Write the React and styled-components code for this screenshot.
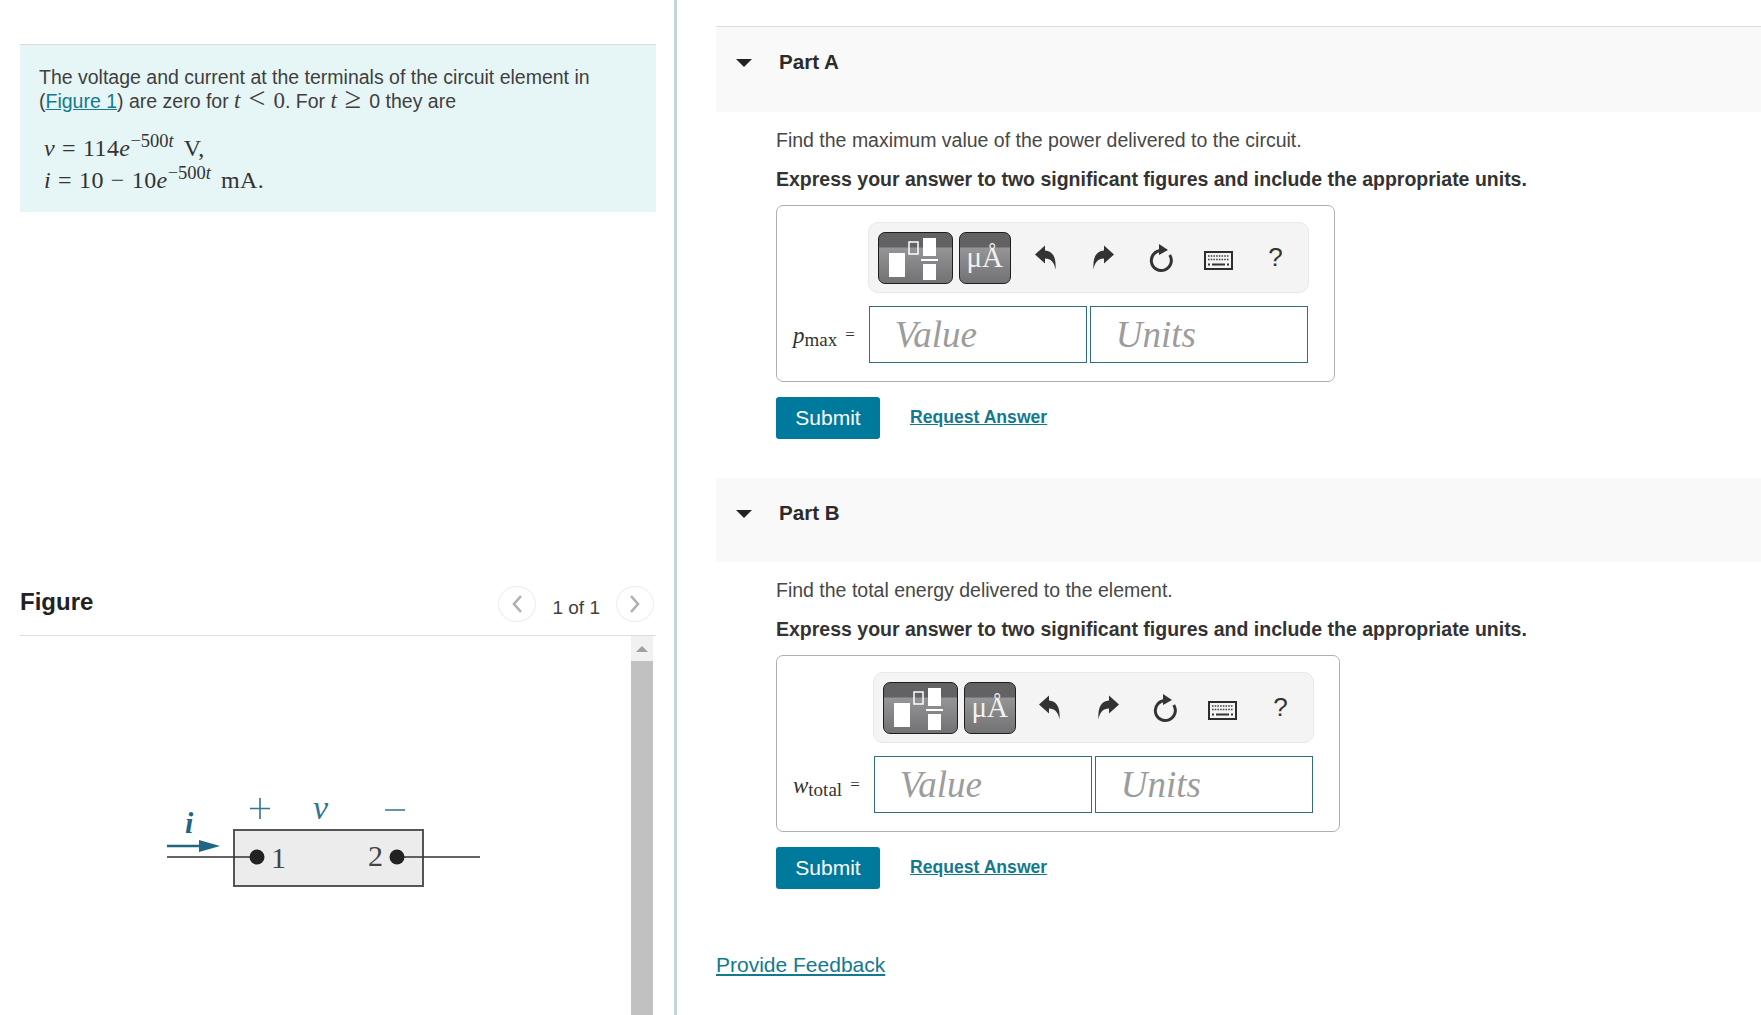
import React from "react";
import styled, { createGlobalStyle } from "styled-components";

const Global = createGlobalStyle`
  html, body { margin: 0; padding: 0; height: 100%; background: #fff; overflow: hidden; }
  body { font-family: "Liberation Sans", Arial, sans-serif; color: #3f3f3f; font-size: 19.5px; }
  * { box-sizing: border-box; }
`;

const Page = styled.div`display: flex; width: 1761px; height: 1015px; overflow: hidden;`;
const LeftPane = styled.aside`width: 677px; height: 100%; flex: none; padding: 44px 18px 0 20px; border-right: 3px solid #c6d4dd; overflow: hidden;`;
const Intro = styled.section`background: #e6f5f6; border-top: 1px solid #dcdcdc; height: 168px; padding: 20px 19px 0;`;
const IntroText = styled.p`margin: 0; line-height: 24px;`;
const TextLink = styled.a`color: #13798f; text-decoration: underline;`;
const InlineMath = styled.span`font-family: "Liberation Serif", serif; font-size: ${p => p.$rel ? 30 : 23}px; line-height: 0; font-style: ${p => p.$italic ? "italic" : "normal"}; margin: ${p => p.$rel ? "0 8px" : "0"};`;
const MathBlock = styled.div`margin: 19px 0 0 5px; font-family: "Liberation Serif", serif; font-size: 24px; letter-spacing: 0.4px; line-height: 32px; color: #333;`;
const Sup = styled.sup`font-size: 18.5px; line-height: 0; vertical-align: 9px; letter-spacing: 0;`;
const MathOp = styled.span`margin: 0 7px;`;
const Unit = styled.span`margin-left: 10px;`;
const FigureHeader = styled.header`display: flex; align-items: center; height: 57px; margin-top: 367px; border-bottom: 1px solid #ddd; padding-bottom: 11px;`;
const FigureTitle = styled.h2`margin: 0; flex: 1; font-size: 24px; font-weight: 700; color: #222;`;
const Pager = styled.div`display: flex; align-items: center; gap: 16px; margin: 4px 2px 0 0;`;
const PagerCount = styled.span`font-size: 19px; padding-top: 9px;`;
const PagerBtn = styled.span`display: flex; align-items: center; justify-content: center; width: 38px; height: 36px; border: 1px solid #ececec; border-radius: 50%;`;
const FigureBody = styled.div`display: flex; align-items: flex-start; height: 400px;`;
const Diagram = styled.svg`flex: none; width: 330px; height: 120px; margin: 146px 0 0 143px;`;
const Scrollbar = styled.div`display: flex; flex-direction: column; width: 22px; height: 100%; margin-left: auto; margin-right: 3px; background: #f1f1f1;`;
const ScrollArrow = styled.div`display: flex; justify-content: center; align-items: center; height: 25px;
  &::before { content: ""; border-left: 6px solid transparent; border-right: 6px solid transparent; border-bottom: 6px solid #a0a0a0; }`;
const ScrollThumb = styled.div`flex: 1; background: #c1c1c1;`;

const RightPane = styled.main`flex: 1; min-width: 0; padding: 26px 0 0 39px;`;
const PartHeader = styled.header`display: flex; align-items: flex-start; height: ${p => p.$h}px; padding: 23px 0 0 20px; background: #f9f9f9; border-top: ${p => p.$line ? "1px solid #dedede" : "none"}; font-size: 20.6px; font-weight: 700; color: #2b2b2b;`;
const Caret = styled.span`width: 0; height: 0; margin: 9px 27px 0 0; border-left: 8px solid transparent; border-right: 8px solid transparent; border-top: 8px solid #222;`;
const PartBody = styled.section`padding: 16px 0 0 60px;`;
const Question = styled.p`margin: 0; line-height: 24px; color: #474747;`;
const Instruction = styled.p`margin: 15px 0 0; line-height: 24px; font-weight: 700; color: #333;`;
const AnswerBox = styled.div`display: grid; grid-template-columns: auto 441px; row-gap: 12px; width: fit-content; margin-top: 14px; padding: 16px 25px 18px 16px; height: 177px; border: 1px solid #b0b0b0; border-radius: 7px;`;
const Toolbar = styled.div`grid-column: 2; display: flex; align-items: center; height: 71px; padding-left: 9px; background: #f4f4f4; border: 1px solid #e8e8e8; border-radius: 10px;`;
const TemplateBtn = styled.div`display: flex; align-items: center; justify-content: center; width: ${p => p.$w}px; height: 52px; margin-right: 6px; border: 1px solid #1e1e1e; border-radius: 7px; background: linear-gradient(#626264 0 14px, #959597 15px, #727274 100%); color: #f2f2f2; font-family: "Liberation Serif", serif; font-size: 29px;`;
const ToolIcon = styled.div`display: flex; align-items: center; justify-content: center; width: 57.5px; flex: none; color: #333; font-size: 26px;`;
const KeyboardSlot = styled(ToolIcon)`padding-top: 5px;`;
const EqLabel = styled.div`align-self: center; padding: 3px 13px 0 0; font-family: "Liberation Serif", serif; font-size: 23px; color: #333; white-space: nowrap;`;
const Sub = styled.sub`font-size: 19px; line-height: 0; vertical-align: -3px; font-style: normal;`;
const EqSign = styled.span`font-size: 17px; margin-left: 8px; vertical-align: 3px;`;
const Inputs = styled.div`display: flex; gap: 3px; padding-left: 1px;`;
const InputBox = styled.div`display: flex; align-items: center; width: 218px; height: 57px; padding-left: 25px; border: 1px solid #2f6d80; font-family: "Liberation Serif", serif; font-style: italic; font-size: 37px; color: #9c9c9c;`;
const Actions = styled.div`display: flex; align-items: center; margin-top: 15px;`;
const Submit = styled.button`width: 104px; height: 42px; padding: 0; border: none; border-radius: 3px; background: #007a9c; color: #fff; font: 400 21px "Liberation Sans", sans-serif;`;
const RequestLink = styled.a`margin: -1px 0 0 30px; font-size: 17.6px; font-weight: 700; color: #13798f; text-decoration: underline;`;
const Feedback = styled.a`display: block; margin-top: 64px; font-size: 21px; line-height: 24px; color: #13798f; text-decoration: underline;`;
const PartWrap = styled.div`margin-bottom: ${p => p.$mb}px;`;

const Chevron = ({ dir }) => (
  <svg width="12" height="20" viewBox="0 0 12 20" fill="none" stroke="#b0b0b0" strokeWidth="2.6">
    <path d={dir === "l" ? "M10 2 L3 10 L10 18" : "M2 2 L9 10 L2 18"} />
  </svg>
);

const TemplatesGlyph = () => (
  <svg width="72" height="50" viewBox="0 0 72 50">
    <rect x="10" y="20" width="16" height="24" fill="#fff" />
    <rect x="30" y="9" width="9" height="12" fill="none" stroke="#fff" strokeWidth="1.5" />
    <rect x="44" y="5" width="13" height="18" fill="#fff" />
    <rect x="42" y="26" width="17" height="2" fill="#fff" />
    <rect x="44" y="31" width="13" height="16" fill="#fff" />
  </svg>
);
const Undo = ({ flip }) => (
  <svg width="24" height="27" viewBox="0 0 24 27" fill="#333" style={flip ? { transform: "scaleX(-1)" } : undefined}>
    <path d="M1 10.5 L11 1.5 V6.5 C18 7 22.5 12 21.5 25.5 C20 18 17 14.5 11 14.5 V19.5 Z" />
  </svg>
);
const Reset = () => (
  <svg width="28" height="30" viewBox="0 0 28 30" fill="none">
    <path d="M15 7.5 A10 10 0 1 0 22.7 12" stroke="#333" strokeWidth="3" />
    <path d="M12 1 L21 7 L12 12 Z" fill="#333" />
  </svg>
);
const Keyboard = () => (
  <svg width="29" height="19" viewBox="0 0 29 19">
    <rect x="1" y="1" width="27" height="17" fill="#f4f4f4" stroke="#2d2d2d" strokeWidth="2" />
    <path d="M4 5 H25 M4 8.5 H25" stroke="#444" strokeWidth="1.6" strokeDasharray="1.6 1.1" />
    <path d="M4 13.5 H6 M8 13.5 H21 M23 13.5 H25" stroke="#333" strokeWidth="1.8" />
  </svg>
);

const Part = ({ name, line, h, mb, question, varName, sub }) => (
  <PartWrap $mb={mb}>
    <PartHeader $line={line} $h={h}>
      <Caret />
      Part {name}
    </PartHeader>
    <PartBody>
      <Question>{question}</Question>
      <Instruction>Express your answer to two significant figures and include the appropriate units.</Instruction>
      <AnswerBox>
        <Toolbar>
          <TemplateBtn $w={75}><TemplatesGlyph /></TemplateBtn>
          <TemplateBtn $w={52}>μÅ</TemplateBtn>
          <ToolIcon><Undo /></ToolIcon>
          <ToolIcon><Undo flip /></ToolIcon>
          <ToolIcon><Reset /></ToolIcon>
          <KeyboardSlot><Keyboard /></KeyboardSlot>
          <ToolIcon>?</ToolIcon>
        </Toolbar>
        <EqLabel><i>{varName}</i><Sub>{sub}</Sub><EqSign>=</EqSign></EqLabel>
        <Inputs>
          <InputBox>Value</InputBox>
          <InputBox>Units</InputBox>
        </Inputs>
      </AnswerBox>
      <Actions>
        <Submit>Submit</Submit>
        <RequestLink href="#">Request Answer</RequestLink>
      </Actions>
    </PartBody>
  </PartWrap>
);

export default function App() {
  return (
    <Page>
      <Global />
      <LeftPane>
        <Intro>
          <IntroText>
            The voltage and current at the terminals of the circuit element in (<TextLink href="#">Figure 1</TextLink>) are zero for <InlineMath $italic>t</InlineMath><InlineMath $rel>&lt;</InlineMath><InlineMath>0</InlineMath>. For <InlineMath $italic>t</InlineMath><InlineMath $rel>≥</InlineMath>0 they are
          </IntroText>
          <MathBlock>
            <div><i>v</i><MathOp>=</MathOp>114<i>e</i><Sup>−500<i>t</i></Sup><Unit>V,</Unit></div>
            <div><i>i</i><MathOp>=</MathOp>10<MathOp>−</MathOp>10<i>e</i><Sup>−500<i>t</i></Sup><Unit>mA.</Unit></div>
          </MathBlock>
        </Intro>
        <FigureHeader>
          <FigureTitle>Figure</FigureTitle>
          <Pager>
            <PagerBtn><Chevron dir="l" /></PagerBtn>
            <PagerCount>1 of 1</PagerCount>
            <PagerBtn><Chevron dir="r" /></PagerBtn>
          </Pager>
        </FigureHeader>
        <FigureBody>
          <Diagram viewBox="163 782 330 120">
            <rect x="234" y="830" width="189" height="56" fill="#ececec" stroke="#555" strokeWidth="2" />
            <path d="M167 857 H257 M397 857 H480" stroke="#333" strokeWidth="1.6" />
            <circle cx="257" cy="857" r="7.5" fill="#222" />
            <circle cx="397" cy="857" r="7.5" fill="#222" />
            <path d="M167 846 H205" stroke="#1f6585" strokeWidth="2.4" />
            <path d="M199 840 L220 846 L199 852 Z" fill="#1f6585" />
            <path d="M250 808.5 H270 M260 798 V819 M385 810 H405" stroke="#2f7690" strokeWidth="1.6" />
            <g fontFamily="Liberation Serif, serif" fontSize="30">
              <text x="271" y="868" fill="#444">1</text>
              <text x="368" y="866" fill="#444">2</text>
              <text x="185" y="833" fill="#1f6585" fontStyle="italic" fontWeight="700">i</text>
              <text x="313" y="819" fill="#2f7690" fontStyle="italic" fontSize="34">v</text>
            </g>
          </Diagram>
          <Scrollbar>
            <ScrollArrow />
            <ScrollThumb />
          </Scrollbar>
        </FigureBody>
      </LeftPane>
      <RightPane>
        <Part name="A" line h={86} mb={39} question="Find the maximum value of the power delivered to the circuit." varName="p" sub="max" />
        <Part name="B" h={84} mb={40} question="Find the total energy delivered to the element." varName="w" sub="total" />
        <Feedback href="#">Provide Feedback</Feedback>
      </RightPane>
    </Page>
  );
}
